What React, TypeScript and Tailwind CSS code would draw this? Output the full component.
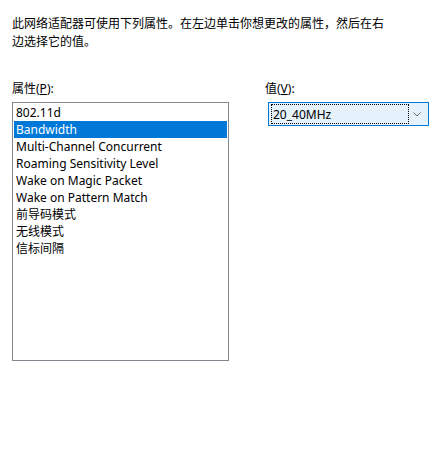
import React from "react";

const items = [
  "802.11d",
  "Bandwidth",
  "Multi-Channel Concurrent",
  "Roaming Sensitivity Level",
  "Wake on Magic Packet",
  "Wake on Pattern Match",
  "前导码模式",
  "无线模式",
  "信标间隔",
];

export default function App() {
  return (
    <div
      className="w-[441px] h-[463px] bg-white text-black text-[12px] leading-[17px] relative"
      style={{ fontFamily: '"Noto Sans", "Noto Sans CJK SC", sans-serif' }}
    >
      <div className="pt-[15px] pl-[12px] pr-[40px] leading-[18px]">
        此网络适配器可使用下列属性。在左边单击你想更改的属性，然后在右
        <br />
        边选择它的值。
      </div>
      <div className="flex mt-[29px] pl-[12px]">
        <div className="flex flex-col w-[217px]">
          <div className="h-[20px] leading-[18px]">
            属性(<span className="underline">P</span>):
          </div>
          <div className="mt-[2px] h-[259px] border border-[#828790] p-[1px] flex flex-col">
            {items.map((it, i) => (
              <div
                key={it}
                className={
                  "h-[17px] leading-[17px] pl-[2px] whitespace-nowrap " +
                  (i === 1 ? "bg-[#0078d7] text-white" : "")
                }
              >
                {it}
              </div>
            ))}
          </div>
        </div>
        <div className="flex flex-col ml-[39px]">
          <div className="h-[20px] leading-[18px] pl-[1px] -ml-[4px]">
            值(<span className="underline">V</span>):
          </div>
          <div className="mt-[2px] w-[161px] h-[24px] border border-[#0078d7] bg-[#e5f1fb] flex items-center pl-[2px] pr-[6px]">
            <div className="h-[20px] w-[138px] border border-dotted border-black flex items-center pl-[1px]">
              20_40MHz
            </div>
            <div className="flex-1 flex justify-end pr-[1px]">
              <svg width="8" height="5" viewBox="0 0 8 5">
                <path d="M0.5 0.5 L4 4 L7.5 0.5" fill="none" stroke="#707070" strokeWidth="1" />
              </svg>
            </div>
          </div>
        </div>
      </div>
    </div>
  );
}
